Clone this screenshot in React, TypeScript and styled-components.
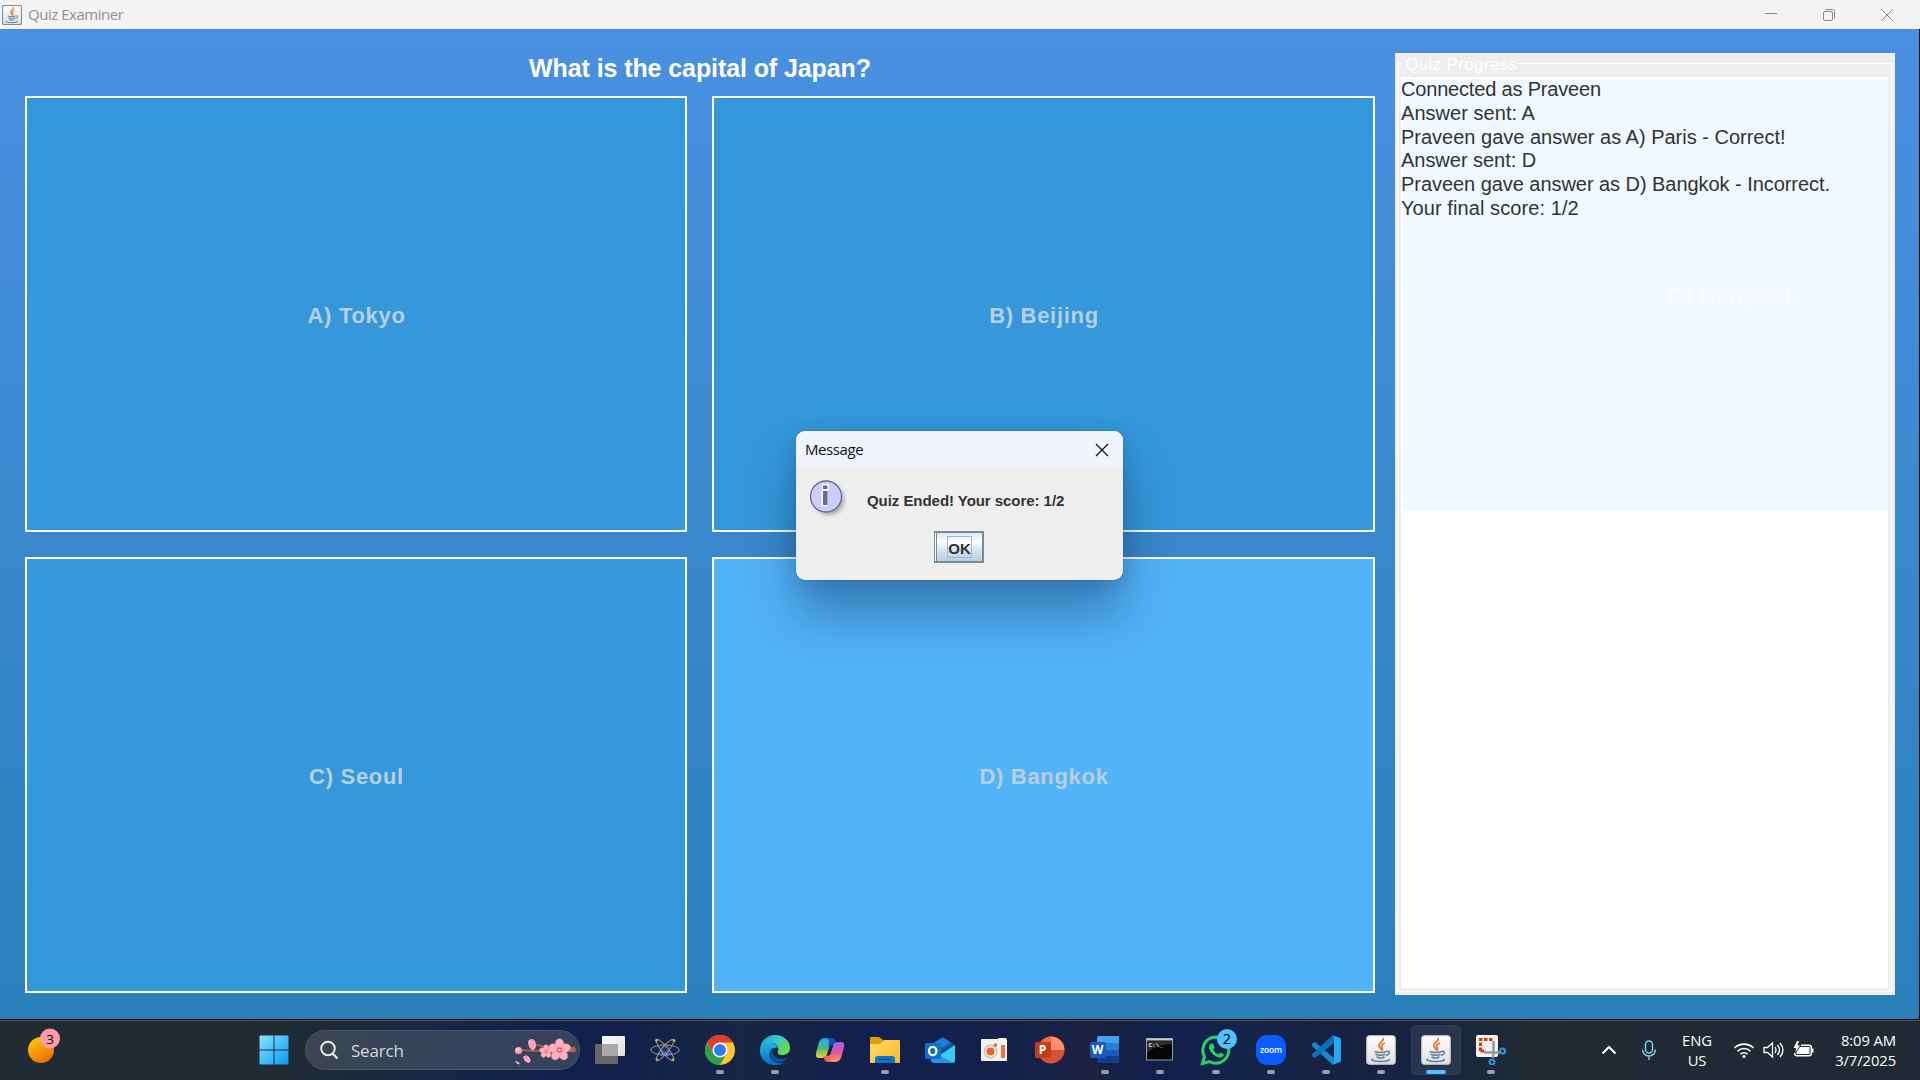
import React from "react";
import styled, { createGlobalStyle } from "styled-components";

const Global = createGlobalStyle`
  * { box-sizing: border-box; }
  body { margin: 0; overflow: hidden; background: #000; }
`;

const Desktop = styled.div`
  width: 1920px;
  height: 1080px;
  position: relative;
  display: flex;
  flex-direction: column;
  overflow: hidden;
  font-family: "Liberation Sans", Arial, sans-serif;
`;
const TitleBar = styled.header`
  height: 29px;
  flex: none;
  display: flex;
  align-items: center;
  background: #f3f3f3;
  color: #919191;
  padding-left: 2px;
  font: 15px/29px "Open Sans", "Noto Sans", sans-serif;
  letter-spacing: -0.47px;
`;
const WindowTitle = styled.span`
  flex: 1;
  padding-left: 6px;
`;
const Controls = styled.div`
  display: flex;
  gap: 42px;
  padding-right: 25px;
  svg { display: block; }
`;
const Content = styled.main`
  height: 991px;
  flex: none;
  display: flex;
  gap: 20px;
  padding: 24px 24px 25px 25px;
  border-right: 1px solid #000;
  border-bottom: 1px solid #000;
  background: linear-gradient(#4a90e2, #2980b9);
`;
const QuizColumn = styled.section`
  width: 1350px;
  display: flex;
  flex-direction: column;
`;
const Question = styled.h1`
  margin: 0;
  height: 43px;
  text-align: center;
  color: #fff;
  font-size: 25px;
  font-weight: bold;
  line-height: 31px;
  letter-spacing: -0.09px;
`;
const AnswerGrid = styled.div`
  display: grid;
  grid-template-columns: 662px 663px;
  grid-template-rows: 436px 436px;
  gap: 25px;
`;
const Answer = styled.button<{ $hot?: boolean }>`
  border: 2px solid #fff;
  padding: 3px 0 0 1px;
  background: ${(p) => (p.$hot ? "#52b3f9" : "#3498db")};
  color: #b8cfe5;
  font: bold 22px "Liberation Sans", Arial, sans-serif;
  letter-spacing: 0.7px;
`;
const Panel = styled.aside`
  width: 500px;
  height: 942px;
  background: #eee;
  padding: 10px 3px 3px 2px;
  position: relative;
`;
const Frame = styled.div`
  height: 929px;
  border: 1px solid #fff;
  padding: 13px 3px 3px 3px;
`;
const Legend = styled.span`
  position: absolute;
  left: 7px;
  top: 2px;
  padding: 0 1px 0 3px;
  background: #eee;
  color: #fff;
  font-size: 17px;
  line-height: 20px;
  letter-spacing: 0.35px;
`;
const Log = styled.div`
  height: 911px;
  background: #fff;
  padding: 2px 0 0 2px;
`;
const LogBody = styled.div`
  height: 432px;
  background: #f0f8ff;
  color: #333;
  font-size: 20px;
`;
const Line = styled.div<{ $tracking: number }>`
  height: 23.8px;
  line-height: 20px;
  margin-left: -2px;
  white-space: nowrap;
  letter-spacing: ${(p) => p.$tracking}px;
`;
const Ghost = styled.span`
  position: absolute;
  left: 273px;
  top: 230px;
  color: #f6fafe;
  font-size: 22px;
  font-weight: bold;
  letter-spacing: 0.7px;
`;
const Dialog = styled.div`
  position: absolute;
  left: 796px;
  top: 431px;
  width: 327px;
  height: 149px;
  border-radius: 9px;
  overflow: hidden;
  background: #eee;
  box-shadow: 0 0 1px rgba(0, 0, 0, 0.55), 0 34px 50px rgba(0, 20, 50, 0.34), 0 3px 20px rgba(0, 20, 50, 0.12);
`;
const DialogTitle = styled.div`
  height: 37px;
  display: flex;
  align-items: center;
  justify-content: space-between;
  padding: 0 14px 0 9px;
  background: #f0f3fb;
  color: #111;
  font: 15px/37px "Open Sans", "Noto Sans", sans-serif;
  letter-spacing: -0.4px;
`;
const DialogBody = styled.div`
  display: flex;
  padding: 11px 0 0 13px;
  height: 63px;
`;
const Message = styled.div`
  padding: 13px 0 0 18px;
  font-size: 15px;
  line-height: 17px;
  font-weight: bold;
  color: #333;
  white-space: nowrap;
  letter-spacing: -0.05px;
`;
const OkButton = styled.button`
  display: flex;
  align-items: center;
  justify-content: center;
  width: 50px;
  height: 32px;
  margin: 0 0 0 138px;
  padding: 0;
  border: 2px solid #7a8a99;
  border-left: 1px solid #7a8a99;
  box-shadow: inset 1px 0 #fff, inset 2px 0 #7a8a99;
  background: linear-gradient(#dde8f3, #fff 32%, #dce7f1 55%, #b8cfe5);
`;
const OkLabel = styled.span`
  border: 1px solid #a3b8cc;
  height: 22px;
  width: 25px;
  margin-left: 2px;
  font: bold 15px/23px "Liberation Sans", Arial, sans-serif;
  color: #333;
`;
const Taskbar = styled.footer`
  height: 60px;
  flex: none;
  display: flex;
  align-items: center;
  border-top: 1px solid #4a525a;
  padding-bottom: 1px;
  background: linear-gradient(90deg, #202b34 0, #202b34 290px, #14254a 480px, #11204b 600px, #152744 740px, #11204c 860px, #14224a 1020px, #1c2140 1090px, #11204b 1150px, #14254a 1250px, #182142 1340px, #162443 1420px, #202b34 1530px, #1f2a35 100%);
  color: #fff;
  font-family: "Open Sans", "Noto Sans", sans-serif;
`;
const Weather = styled.div`
  width: 251px;
  padding: 0 0 0 24px;
  svg { display: block; }
`;
const Start = styled.div`
  width: 54px;
  padding-left: 8px;
  svg { display: block; }
`;
const SearchBox = styled.div`
  width: 275px;
  height: 40px;
  display: flex;
  align-items: center;
  border: 1px solid #4a5468;
  border-radius: 20px;
  background: linear-gradient(90deg, #3c464e, #37435a 35%, #35425f);
  color: #d4d8df;
  font-size: 17px;
  letter-spacing: -0.2px;
  padding: 0 3px 0 13px;
`;
const SearchText = styled.span`
  flex: 1;
  padding-left: 12px;
`;
const Apps = styled.div`
  display: flex;
  gap: 5.06px;
  margin-left: 5px;
`;
const AppSlot = styled.div<{ $active?: boolean }>`
  position: relative;
  width: 50px;
  height: 50px;
  border-radius: 5px;
  display: flex;
  align-items: center;
  justify-content: center;
  background: ${(p) => (p.$active ? "rgba(255,255,255,0.075)" : "transparent")};
  box-shadow: ${(p) => (p.$active ? "inset 0 0 0 1px rgba(255,255,255,0.05)" : "none")};
`;
const Running = styled.i<{ $active?: boolean }>`
  position: absolute;
  bottom: 1px;
  left: ${(p) => (p.$active ? 15 : 21)}px;
  width: ${(p) => (p.$active ? 20 : 8)}px;
  height: 4px;
  border-radius: 2px;
  background: ${(p) => (p.$active ? "#4cc2ff" : "#9a9fae")};
`;
const Tray = styled.div`
  flex: 1;
  display: flex;
  align-items: center;
  justify-content: flex-end;
  padding-right: 24px;
  svg { display: block; }
`;
const TrayText = styled.div<{ $right?: boolean; $width: number; $ml: number }>`
  width: ${(p) => p.$width}px;
  margin-left: ${(p) => p.$ml}px;
  text-align: ${(p) => (p.$right ? "right" : "center")};
  font-size: 14.8px;
  line-height: 20px;
  white-space: nowrap;
  letter-spacing: -0.1px;
`;
const TrayIcon = styled.span<{ $ml: number }>`
  margin-left: ${(p) => p.$ml}px;
`;

const JavaIcon = ({ size, small }: { size: number; small?: boolean }) => (
  <svg width={size} height={size} viewBox="0 0 30 30">
    <defs>
      <linearGradient id="jv" x2="0" y2="1"><stop stopColor="#fff" /><stop offset="1" stopColor="#dedede" /></linearGradient>
    </defs>
    <rect x=".7" y=".7" width="28.6" height="28.6" rx="2.5" fill="url(#jv)" stroke={small ? "#7890a5" : "#c8c8c8"} strokeWidth={small ? 1.8 : 1} />
    <path d="M17 3c2 3-5 5-4 8 .4 1.700 2.500 2.800 2 4.500M19 8c-3 1-4.500 2.500-3 4.500 1 1.200.5 2.500-.5 3" fill="none" stroke="#e8762d" strokeWidth="1.7" />
    <path d="M8.500 16.500c3 1.200 9 1.200 12 0M9.500 19.300c3 1.200 7 1.200 10 0M10.500 22c2.500 1 6 1 8 0M20.500 16.500c4-1.500 4 3-.5 4M7 24c-4 1.500 4 2.600 8 2.400 5 0 9.500-1 8-2.400" fill="none" stroke="#5b7f9f" strokeWidth="1.5" />
  </svg>
);
const Flower = ({ x, y, r }: { x: number; y: number; r: number }) => (
  <g transform={`translate(${x} ${y})`}>
    {[0, 72, 144, 216, 288].map((a) => (
      <ellipse key={a} cx="0" cy={-r * 0.58} rx={r * 0.38} ry={r * 0.45} fill="#ffb0be" stroke="#f58ba0" strokeWidth=".5" transform={`rotate(${a})`} />
    ))}
    <circle r={r * 0.25} fill="#e8567c" />
    <circle r={r * 0.1} fill="#fff" />
  </g>
);
const Blossom = () => (
  <svg width="62" height="30" viewBox="0 0 62 30">
    <path d="M62 14.500L44 15 28 11 18 9M46 15L20 16 6 15" fill="none" stroke="#9b6446" strokeWidth="2" />
    <path d="M44 13.500L61 11.500v6L46 16z" fill="#a66d48" />
    <circle cx="4.500" cy="15.500" r="3.600" fill="#ff9fb4" /><circle cx="3.700" cy="14.500" r="1.800" fill="#ffc4cf" />
    <path d="M14 6q4-4 7 0 3 7-2.500 9.500Q14 13 14 6M9 22q3-3.500 6 0 3 3.500 0 6-5-1-6-6M1 26q4 0 5 3.500-4-.5-5-3.500" fill="#ffabba" />
    <path d="M18.500 5q2 5-1 9M12 21l1 4" stroke="#ff7f9c" strokeWidth="1" fill="none" />
    <Flower x={32} y={16.5} r={6.5} />
    <Flower x={45.500} y={15} r={11} />
  </svg>
);
const P = { width: 30, height: 30, viewBox: "0 0 30 30" };
const icons: Record<string, React.ReactNode> = {
  tasks: (
    <svg {...P}><defs><linearGradient id="tv" x2="1" y2="1"><stop stopColor="#fff" /><stop offset="1" stopColor="#ddd" /></linearGradient></defs>
      <rect x="7" y="1" width="23" height="20" rx="1" fill="url(#tv)" /><rect x="0" y="9" width="23" height="20" rx="1" fill="#666" /><rect x="7" y="9" width="16" height="12" fill="#a9a9a9" /></svg>
  ),
  atom: (
    <svg {...P}><defs><radialGradient id="at" cx=".5" cy=".2" r=".8"><stop stopColor="#59606e" /><stop offset=".5" stopColor="#222936" /><stop offset="1" stopColor="#3f7be0" /></radialGradient></defs>
      <circle cx="15" cy="13.500" r="5.500" fill="url(#at)" /><path d="M8 17q7 3 14 0l-3 4h-8z" fill="#3974dc" opacity=".75" />
      <g fill="none" stroke="#8f939f" strokeWidth="1"><ellipse cx="15" cy="15" rx="14.300" ry="5" /><ellipse cx="15" cy="15" rx="13.500" ry="3.300" transform="rotate(51 15 15)" /><ellipse cx="15" cy="15" rx="13.500" ry="3.300" transform="rotate(-51 15 15)" /></g>
      <g fill="#d8a43c"><circle cx="6.500" cy="5.500" r="1.500" /><circle cx="24" cy="5.500" r="1.500" /><circle cx="7" cy="24.500" r="1.300" /><circle cx="23" cy="24.500" r="1.300" /></g></svg>
  ),
  chrome: (
    <svg {...P}><circle cx="15" cy="15" r="15" fill="#fdc82f" /><path d="M2 7.500A15 15 0 0 1 28 7.500H15L8.500 18.700z" fill="#e33b2e" /><path d="M8.500 18.700L2 7.500A15 15 0 0 0 15 30l6.500-11.300z" fill="#2da04e" /><circle cx="15" cy="15" r="7.500" fill="#fff" /><circle cx="15" cy="15" r="6" fill="#2f7cf0" /></svg>
  ),
  edge: (
    <svg {...P}><defs><linearGradient id="e1" x2="1" y2=".5"><stop stopColor="#199ce0" /><stop offset=".55" stopColor="#35c7d2" /><stop offset="1" stopColor="#68df45" /></linearGradient><linearGradient id="e2" x2="0" y2="1"><stop stopColor="#27b2de" /><stop offset="1" stopColor="#0868c8" /></linearGradient></defs>
      <path d="M0 14C1 5 8 0 15 0c9 0 15 6 15 13 0 5-4 7-8 7-4 0-5-2-4-4 2-5-3-8-8-8C5 8 1 11 0 14z" fill="url(#e1)" /><path d="M0 14c1-5 6-6 9-6 5 0 8 2 9 5-8-2-11 7-6 12 3 3 8 4 12 2-3 3-6 3-9 3C6 30-1 23 0 14z" fill="url(#e2)" /><path d="M12 13c-4 5-1 13 6 14 4 .5 7-1 9-4-5 2-12 1-14-4-1-2-1-4-1-6z" fill="#0f519d" /></svg>
  ),
  copilot: (
    <svg {...P}><defs><linearGradient id="c1" x2="0" y2="1"><stop stopColor="#21a9f4" /><stop offset=".5" stopColor="#48b977" /><stop offset="1" stopColor="#f7cf27" /></linearGradient><linearGradient id="c2" x2="0" y2="1"><stop stopColor="#9a61ee" /><stop offset=".5" stopColor="#e553a3" /><stop offset="1" stopColor="#ff9d55" /></linearGradient></defs>
      <path d="M10 3h7L12 19q-1 4-5 4H4q-4 0-3-5L4 7q2-4 6-4z" fill="url(#c1)" /><path d="M9 3h8q3 0 4 4l1 3h-5q-3 0-4 3l1-5q1-5-5-5z" fill="#1649c8" /><path d="M20 27h-7l5-16q1-4 5-4h3q4 0 3 5l-3 11q-2 4-6 4z" fill="url(#c2)" /><path d="M21 27h-8q-3 0-4-4l-1-2h4q3 0 5-3l-2 5q-1 4 6 4z" fill="#f06b55" /></svg>
  ),
  folder: (
    <svg {...P}><defs><linearGradient id="fo" x2="1" y2="1"><stop stopColor="#ffdc6a" /><stop offset="1" stopColor="#fcb827" /></linearGradient></defs><path d="M0 3q0-1 1-1h8l4 3v5H0z" fill="#e29c05" /><path d="M0 9h10l4-4h15q1 0 1 1v21q0 1-1 1H1q-1 0-1-1z" fill="url(#fo)" /><path d="M5 28v-4q0-3 3-3h14q3 0 3 3v4z" fill="#0d75c8" /><path d="M9 24.500h12" stroke="#0a4a8a" strokeWidth="1.300" /></svg>
  ),
  outlook: (
    <svg {...P}><path d="M6 9L18 2l12 8v8H6z" fill="#1267b5" /><path d="M8 9l9-6 8 4-14 9z" fill="#1c82d8" /><path d="M30 10v15q0 3-3 3H8l5-11z" fill="#3bcbf2" /><path d="M6 17l24 11H10q-4 0-4-3z" fill="#2495e8" /><path d="M30 10L15 20l-2-3 14-9z" fill="#0d4f9e" /><rect y="8" width="16" height="16" rx="1.500" fill="#0f6fd0" /><ellipse cx="7.700" cy="16" rx="3.700" ry="4.200" fill="none" stroke="#fff" strokeWidth="2.200" /></svg>
  ),
  recorder: (
    <svg {...P}><path d="M1 5q0-1 1-1h16l1-1h7l1 2v20q0 1-1 1H2q-1 0-1-1z" fill="#f2f1f1" /><circle cx="10.500" cy="16.500" r="6.200" fill="none" stroke="#c9c4c2" strokeWidth="1.600" /><circle cx="10.500" cy="16.500" r="4" fill="#e86424" /><circle cx="15.500" cy="10" r="1.800" fill="#e86424" /><rect x="21" y="10" width="4" height="13" fill="#ea7538" /></svg>
  ),
  ppt: (
    <svg {...P}><circle cx="16" cy="15" r="13.500" fill="#d45230" /><path d="M16 1.500A13.500 13.500 0 0 1 29.500 15H16z" fill="#ff8f6b" /><path d="M16 1.500A13.500 13.500 0 0 0 3 15h13z" fill="#ec6c49" /><rect y="7" width="16" height="16" rx="1.500" fill="#c43e1c" /><text x="3.800" y="19.300" fontFamily="Open Sans" fontWeight="700" fontSize="12" fill="#fff">P</text></svg>
  ),
  word: (
    <svg {...P}><path d="M7 3q0-2 2-2h20v7H7z" fill="#41a5ee" /><path d="M7 8h22v7H7z" fill="#2b7cd3" /><path d="M7 15h22v6H7z" fill="#185abd" /><path d="M7 21h22v7H9q-2 0-2-2z" fill="#103f91" /><rect y="7" width="16" height="16" rx="1.500" fill="#185abd" /><text x="1.700" y="19.300" fontFamily="Open Sans" fontWeight="700" fontSize="12" fill="#fff">W</text></svg>
  ),
  cmd: (
    <svg {...P}><rect x="1.500" y="3.500" width="26" height="21.500" fill="#050505" stroke="#9b9b9b" /><path d="M2 6h25v3Q9 10 2 18z" fill="#2c2c2c" /><path d="M1.500 4.500h26" stroke="#c8c8c8" strokeWidth="2" /><text x="3.500" y="12" fontFamily="Liberation Mono" fontWeight="700" fontSize="6" fill="#e8e8e8">C:\_</text></svg>
  ),
  whatsapp: (
    <svg {...P} overflow="visible"><path d="M1.500 28.500l2-7a13 13 0 1 1 5 5z" fill="none" stroke="#25d366" strokeWidth="3" /><path d="M10 8.500q2-1 3 2l.7 2-1.500 2q2 4 5 5l2-2 3.500 1.500q.5 3-3.500 3.500c-6 0-13-8-11-12z" fill="#25d366" /><circle cx="26" cy="4" r="10" fill="#4cc2ff" /><text x="26" y="9.300" textAnchor="middle" fontFamily="Open Sans" fontSize="14.500" fill="#001">2</text></svg>
  ),
  zoom: (
    <svg {...P}><rect width="30" height="30" rx="11" fill="#0b5cff" /><text x="15" y="17.500" textAnchor="middle" textLength="22" fontFamily="Open Sans" fontWeight="600" fontSize="8.500" fill="#fff">zoom</text></svg>
  ),
  code: (
    <svg {...P}><path d="M2 8l2-1 19 16v6l-1 1L1 11V9z" fill="#1688d2" /><path d="M2 22l2 1L23 8V1l-1-1L1 19v2z" fill="#0c6eb5" /><path d="M21 0l8 3q1 .5 1 2v20q0 1.500-1 2l-8 3q2-1 2-3V3q0-2-2-3z" fill="#2aa7f1" /></svg>
  ),
  java: <JavaIcon size={30} />,
  snip: (
    <svg {...P}><rect width="22" height="22" rx="2" fill="#f4f4f4" /><path d="M4.500 16V4.500H17M4.500 16H10" fill="none" stroke="#d83b01" strokeWidth="3" strokeDasharray="3.500 1.500" /><path d="M17.500 6v12l-.5 5M8 17.500h16" fill="none" stroke="#9a9a9a" strokeWidth="2.500" /><circle cx="26.500" cy="16" r="2.500" fill="none" stroke="#1b9de2" strokeWidth="2" /><circle cx="16" cy="27" r="2.500" fill="none" stroke="#1b9de2" strokeWidth="2" /></svg>
  ),
};
const taskItems: { id: string; run?: boolean; active?: boolean }[] = [
  { id: "tasks" }, { id: "atom" }, { id: "chrome", run: true }, { id: "edge", run: true }, { id: "copilot" },
  { id: "folder", run: true }, { id: "outlook" }, { id: "recorder" }, { id: "ppt" }, { id: "word", run: true },
  { id: "cmd", run: true }, { id: "whatsapp", run: true }, { id: "zoom", run: true }, { id: "code", run: true },
  { id: "java", run: true }, { id: "java", run: true, active: true }, { id: "snip", run: true },
];
const log: { text: string; tracking: number }[] = [
  { text: "Connected as Praveen", tracking: -0.18 },
  { text: "Answer sent: A", tracking: 0.04 },
  { text: "Praveen gave answer as A) Paris - Correct!", tracking: 0 },
  { text: "Answer sent: D", tracking: -0.03 },
  { text: "Praveen gave answer as D) Bangkok - Incorrect.", tracking: -0.05 },
  { text: "Your final score: 1/2", tracking: 0.08 },
];

export default function App() {
  return (
    <Desktop>
      <Global />
      <TitleBar>
        <JavaIcon size={20} small />
        <WindowTitle>Quiz Examiner</WindowTitle>
        <Controls>
          <svg width="16" height="16" stroke="#8a8a8a" fill="none"><path d="M2 6.500h12" /></svg>
          <svg width="16" height="16" stroke="#8a8a8a" fill="none"><rect x="2.500" y="4.500" width="9" height="9" rx="1.500" /><path d="M4.500 2.500h7q2 0 2 2v7" /></svg>
          <svg width="16" height="16" stroke="#8a8a8a" fill="none"><path d="M2 2l12 12M14 2L2 14" /></svg>
        </Controls>
      </TitleBar>
      <Content>
        <QuizColumn>
          <Question>What is the capital of Japan?</Question>
          <AnswerGrid>
            <Answer>A) Tokyo</Answer>
            <Answer>B) Beijing</Answer>
            <Answer>C) Seoul</Answer>
            <Answer $hot>D) Bangkok</Answer>
          </AnswerGrid>
        </QuizColumn>
        <Panel>
          <Frame>
            <Log>
              <LogBody>{log.map((l) => <Line key={l.text} $tracking={l.tracking}>{l.text}</Line>)}</LogBody>
            </Log>
          </Frame>
          <Legend>Quiz Progress</Legend>
          <Ghost>D) Bangkok</Ghost>
        </Panel>
      </Content>
      <Taskbar>
        <Weather>
          <svg width="40" height="44" viewBox="0 0 40 44">
            <defs><linearGradient id="sun" x1=".2" x2=".7" y2="1"><stop stopColor="#ffc90c" /><stop offset="1" stopColor="#ea6a05" /></linearGradient></defs>
            <circle cx="17" cy="22" r="13" fill="url(#sun)" />
            <circle cx="26" cy="10.500" r="10" fill="#ff99a4" />
            <text x="26" y="15.500" textAnchor="middle" fontFamily="Open Sans" fontSize="13.500" fill="#111">3</text>
          </svg>
        </Weather>
        <Start>
          <svg width="30" height="30" viewBox="0 0 30 30">
            <defs><linearGradient id="win" gradientUnits="userSpaceOnUse" x1="0" y1="0" x2="30" y2="30"><stop stopColor="#8be3ff" /><stop offset=".5" stopColor="#43c0fb" /><stop offset="1" stopColor="#0a91f5" /></linearGradient></defs>
            <path d="M1 .5h13.500v14H.5V1zM15.500.5H29l.5.500v13.500h-14zM.5 15.500h14v14H1L.5 29zM15.500 15.500h14V29l-.5.500H15.500z" fill="url(#win)" />
          </svg>
        </Start>
        <SearchBox>
          <svg width="20" height="20" viewBox="0 0 20 20" fill="none" stroke="#e6e8ec" strokeWidth="2"><circle cx="9" cy="8.500" r="6.800" /><path d="M13.500 13.500l5 5" strokeWidth="2.400" /></svg>
          <SearchText>Search</SearchText>
          <Blossom />
        </SearchBox>
        <Apps>
          {taskItems.map((t, i) => (
            <AppSlot key={i} $active={t.active}>{icons[t.id]}{t.run && <Running $active={t.active} />}</AppSlot>
          ))}
        </Apps>
        <Tray>
          <TrayIcon $ml={0}><svg width="16" height="16" fill="none" stroke="#fff" strokeWidth="2"><path d="M1.500 11.500L8 5l6.500 6.500" /></svg></TrayIcon>
          <TrayIcon $ml={24}><svg width="16" height="20" fill="none" stroke="#7cc8e8" strokeWidth="1.500"><rect x="4.500" y="1" width="7" height="12" rx="3.500" /><path d="M1.500 9.500a6.500 6.500 0 0 0 13 0M8 16v4" /></svg></TrayIcon>
          <TrayText $width={40} $ml={20}>ENG<br />US</TrayText>
          <TrayIcon $ml={16}><svg width="22" height="18" viewBox="0 0 22 18" fill="none" stroke="#fff" strokeWidth="1.600"><path d="M1.500 7a13.500 13.500 0 0 1 19 0M4.500 10.200a9.200 9.200 0 0 1 13 0M7.500 13.300a5 5 0 0 1 7 0" /><circle cx="11" cy="15.500" r="1.500" fill="#fff" stroke="none" /></svg></TrayIcon>
          <TrayIcon $ml={8}><svg width="22" height="18" viewBox="0 0 22 18" fill="none" stroke="#fff" strokeWidth="1.300"><path d="M1 6.500h3.500L9.500 2v14l-5-4.500H1zM12 6q2 3 0 6M14.500 4q4 5 0 10M17 2q6 7 0 14" /></svg></TrayIcon>
          <TrayIcon $ml={8}><svg width="22" height="18" viewBox="0 0 22 18"><path d="M8 4.200h8q2.300 0 2.300 2.300v6q0 2.300-2.300 2.300H4q-2.300 0-2.300-2.300V12" fill="none" stroke="#fff" strokeWidth="1.500" /><path d="M7 6h9.500v7H3.500V11zM19 7.500h1.500v4H19zM4 0L.5 7H3L2.500 11 7 4.500H4.500L6 0z" fill="#fff" /></svg></TrayIcon>
          <TrayText $right $width={70} $ml={11}>8:09 AM<br />3/7/2025</TrayText>
        </Tray>
      </Taskbar>
      <Dialog>
        <DialogTitle>
          Message
          <svg width="14" height="14" stroke="#111" fill="none" strokeWidth="1.200"><path d="M1 1l12 12M13 1L1 13" /></svg>
        </DialogTitle>
        <DialogBody>
          <svg width="40" height="42" viewBox="0 0 40 42">
            <defs><filter id="sh"><feGaussianBlur stdDeviation="2" /></filter></defs>
            <circle cx="20" cy="21" r="15" fill="#777" opacity=".6" filter="url(#sh)" />
            <circle cx="17" cy="17.500" r="15.500" fill="#ccf" stroke="#669" strokeWidth="1.300" />
            <path d="M13 5h7v6h-1.500v16h-6V10.500H13z" fill="#fff" />
            <path d="M14 6.500h4.500V10H14zM14 12h4.500v14H14z" fill="#669" />
          </svg>
          <Message>Quiz Ended! Your score: 1/2</Message>
        </DialogBody>
        <OkButton><OkLabel>OK</OkLabel></OkButton>
      </Dialog>
    </Desktop>
  );
}
